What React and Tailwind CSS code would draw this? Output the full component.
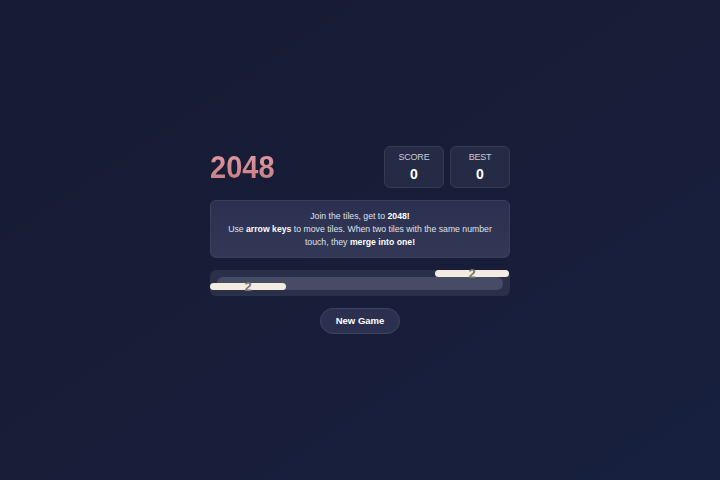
export default function App() {
  const font = { fontFamily: '"Liberation Sans", Arial, sans-serif' };
  return (
    <div
      className="min-h-screen w-full flex items-center justify-center bg-gradient-to-br from-[#171b33] via-[#181d38] to-[#17203f] text-white"
      style={font}
    >
      <div className="w-[300px] flex flex-col gap-3">
        <div className="flex items-center justify-between h-[42px]">
          <h1 className="text-[29px] font-bold leading-none bg-gradient-to-b from-[#e29aa0] to-[#c57c84] bg-clip-text text-transparent mt-[1px] scale-y-110">
            2048
          </h1>
          <div className="flex gap-[6px]">
            <div className="w-[60px] h-[42px] rounded-md bg-[#262b45] border border-[#363b56] flex flex-col items-center justify-center">
              <div className="text-[9px] leading-none text-[#c8cad6] tracking-tight">SCORE</div>
              <div className="text-[14px] font-bold leading-none mt-[5px]">0</div>
            </div>
            <div className="w-[60px] h-[42px] rounded-md bg-[#262b45] border border-[#363b56] flex flex-col items-center justify-center">
              <div className="text-[9px] leading-none text-[#c8cad6] tracking-tight">BEST</div>
              <div className="text-[14px] font-bold leading-none mt-[5px]">0</div>
            </div>
          </div>
        </div>

        <div className="h-[58px] rounded-md bg-gradient-to-b from-[#2b3050] to-[#333857] border border-[#3a3f5c] flex flex-col items-center justify-center text-center text-[8.7px] leading-[13px] text-[#dfe1ea]">
          <div>
            Join the tiles, get to <b className="text-white">2048!</b>
          </div>
          <div>
            Use <b className="text-white">arrow keys</b> to move tiles. When two tiles with the same number
          </div>
          <div>
            touch, they <b className="text-white">merge into one!</b>
          </div>
        </div>

        <div className="relative h-[26px] rounded-md bg-[#2a2f4a] p-[7px] pb-[6px]">
          <div className="h-[13px] rounded-md bg-[#474b66]" />
          <div className="absolute left-[225px] top-[0px] w-[74px] h-[7px] rounded-full bg-[#f3ece1] flex items-center justify-center">
            <span className="text-[13px] font-bold leading-none text-[#7b756f]">2</span>
          </div>
          <div className="absolute left-0 top-[13px] w-[76px] h-[7px] rounded-full bg-[#f3ece1] flex items-center justify-center">
            <span className="text-[13px] font-bold leading-none text-[#7b756f]">2</span>
          </div>
        </div>

        <div className="flex justify-center">
          <button className="h-[26px] w-[80px] rounded-full bg-[#2b3050] border border-[#3e4360] text-[9.5px] font-bold text-white">
            New Game
          </button>
        </div>
      </div>
    </div>
  );
}
